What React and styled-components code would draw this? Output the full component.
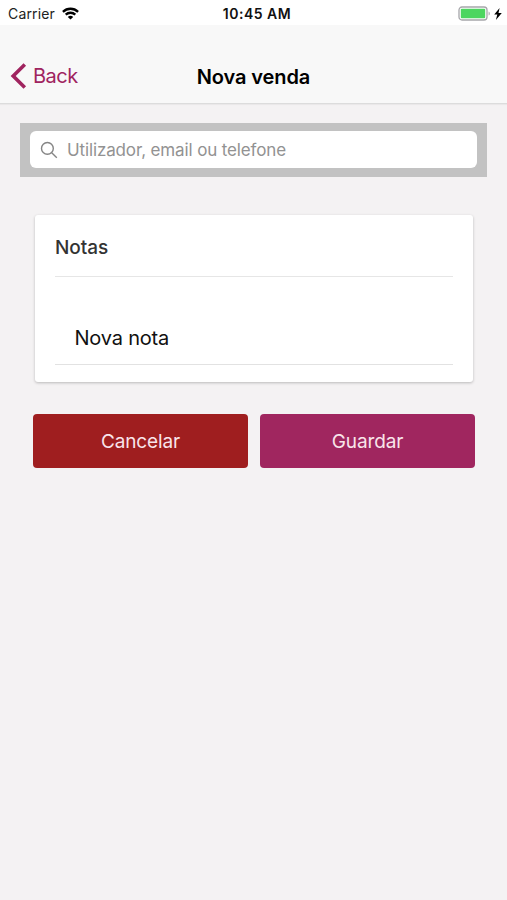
import React from 'react'
import styled, { createGlobalStyle } from 'styled-components'

const GlobalStyle = createGlobalStyle`
  * {
    box-sizing: border-box;
  }
  body {
    margin: 0;
    background: #f4f2f3;
    font-family: Inter, "Liberation Sans", sans-serif;
    color: #000;
  }
`

const Page = styled.div`
  min-height: 900px;
  background: #f4f2f3;
`

const StatusBar = styled.div`
  display: grid;
  grid-template-columns: 1fr auto 1fr;
  align-items: center;
  height: 25px;
  padding: 2px 5px 0 8px;
  background: #fff;
`

const Carrier = styled.div`
  display: flex;
  align-items: center;
  gap: 7px;
  font-size: 14px;
  letter-spacing: 0.15px;
  color: #222;
`

const Clock = styled.div`
  padding-left: 4px;
  font-size: 14px;
  font-weight: 600;
  letter-spacing: 0.5px;
  color: #111;
`

const Power = styled.div`
  display: flex;
  align-items: center;
  justify-content: flex-end;
  gap: 3px;
`

const NavBar = styled.div`
  display: grid;
  grid-template-columns: 1fr auto 1fr;
  align-items: center;
  height: 79px;
  padding: 24px 10px 0;
  background: #f8f8f8;
  border-bottom: 1px solid #dcdcdc;
  box-shadow: 0 1px 1px rgba(0, 0, 0, 0.04);
`

const BackBtn = styled.button`
  display: flex;
  align-items: center;
  gap: 6px;
  padding: 0;
  border: none;
  background: none;
  font: inherit;
  font-size: 20px;
  letter-spacing: -0.5px;
  color: #a0245f;
  cursor: pointer;
`

const Title = styled.h1`
  margin: 0;
  padding-top: 1px;
  font-size: 20px;
  font-weight: 600;
  letter-spacing: -0.1px;
`

const Content = styled.div`
  padding: 19px 20px 0;
`

const SearchBar = styled.div`
  padding: 8px 10px 9px;
  background: #c2c2c2;
`

const SearchField = styled.label`
  display: flex;
  align-items: center;
  gap: 9px;
  height: 37px;
  padding: 0 11px 0 10px;
  border-radius: 6px;
  background: #fff;
`

const SearchInput = styled.input`
  flex: 1;
  min-width: 0;
  padding: 1px 0 0;
  border: none;
  outline: none;
  background: none;
  font: inherit;
  font-size: 17px;
  letter-spacing: -0.13px;
  &::placeholder {
    color: #929292;
    opacity: 1;
  }
`

const Card = styled.div`
  height: 167px;
  margin: 38px 14px 0 15px;
  padding: 0 20px;
  border-radius: 3px;
  background: #fff;
  box-shadow: 0 1px 3px rgba(0, 0, 0, 0.24);
`

const CardTitle = styled.div`
  display: flex;
  align-items: center;
  height: 62px;
  padding-top: 3px;
  border-bottom: 1px solid #e6e6e6;
  font-size: 19px;
  font-weight: 500;
  letter-spacing: -0.05px;
  color: #333;
`

const Note = styled.div`
  display: flex;
  align-items: flex-end;
  height: 88px;
  padding: 0 20px 14px 19.5px;
  border-bottom: 1px solid #e2e2e2;
  font-size: 20px;
  letter-spacing: -0.2px;
  color: #111;
`

const Actions = styled.div`
  display: grid;
  grid-template-columns: 1fr 1fr;
  gap: 12px;
  margin: 32px 12px 0 13px;
`

const ActionBtn = styled.button`
  height: 54px;
  padding: 1px 0 0;
  border: none;
  border-radius: 4px;
  background: ${(props) => props.$color};
  font: inherit;
  font-size: 19px;
  letter-spacing: -0.15px;
  color: #f9e4ea;
  cursor: pointer;
`

const WifiIcon = () => (
  <svg width="17" height="13" viewBox="0 0 17 13" fill="none" stroke="#000" strokeWidth="2.3">
    <path d="M0.9 4.8C5.2 0.7 11.8 0.7 16.1 4.8" />
    <path d="M3.7 7.7C6.4 5.1 10.6 5.1 13.3 7.7" />
    <path d="M8.5 12.6L5.8 9.9C7.3 8.5 9.7 8.5 11.2 9.9Z" fill="#000" stroke="none" />
  </svg>
)

const BatteryIcon = () => (
  <svg width="33" height="15" viewBox="0 0 33 15">
    <rect x="1" y="1" width="28" height="13" rx="3" fill="#fff" stroke="#a6a6aa" strokeWidth="1.3" />
    <rect x="2.8" y="2.8" width="24.4" height="9.4" rx="1" fill="#4cd660" />
    <path d="M30.6 5.4C32.2 6 32.2 9 30.6 9.6Z" fill="#a6a6aa" />
  </svg>
)

const BoltIcon = () => (
  <svg width="8" height="12" viewBox="0 0 8 12">
    <path d="M5.6 0L0.2 6.6H3.3L1.9 12L7.8 4.9H4.5Z" fill="#000" />
  </svg>
)

const ChevronIcon = () => (
  <svg width="17" height="26" viewBox="0 0 17 26" fill="none">
    <path d="M14.8 1.5L3.2 13L14.8 24.5" stroke="#a0245f" strokeWidth="3.6" />
  </svg>
)

const SearchIcon = () => (
  <svg width="18" height="18" viewBox="0 0 18 18" fill="none" stroke="#858585" strokeWidth="1.4">
    <circle cx="7.4" cy="7.4" r="5.9" />
    <path d="M11.7 11.7L16.8 16.7" />
  </svg>
)

const App = () => {
  return (
    <Page>
      <GlobalStyle />
      <StatusBar>
        <Carrier>
          Carrier
          <WifiIcon />
        </Carrier>
        <Clock>10:45 AM</Clock>
        <Power>
          <BatteryIcon />
          <BoltIcon />
        </Power>
      </StatusBar>
      <NavBar>
        <BackBtn>
          <ChevronIcon />
          Back
        </BackBtn>
        <Title>Nova venda</Title>
      </NavBar>
      <Content>
        <SearchBar>
          <SearchField>
            <SearchIcon />
            <SearchInput placeholder="Utilizador, email ou telefone" />
          </SearchField>
        </SearchBar>
        <Card>
          <CardTitle>Notas</CardTitle>
          <Note>Nova nota</Note>
        </Card>
        <Actions>
          <ActionBtn $color="#9f1e1f">Cancelar</ActionBtn>
          <ActionBtn $color="#a0265f">Guardar</ActionBtn>
        </Actions>
      </Content>
    </Page>
  )
}

export default App
